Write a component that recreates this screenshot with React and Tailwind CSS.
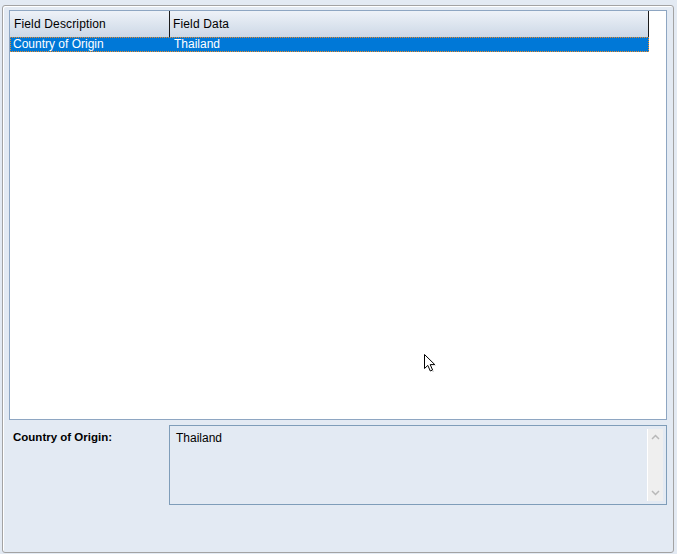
import React from "react";

const font = { fontFamily: '"Liberation Sans", Arial, sans-serif' };

function Cursor() {
    return (
        <svg className="absolute left-[423px] top-[353px]" width="14" height="20" viewBox="0 0 14 20">
            <path d="M1.5 1.5 L1.5 15.5 L4.8 12.4 L7.3 18 L9.6 17 L7.2 11.6 L11.8 11.6 Z" fill="#fff" stroke="#000" strokeWidth="1" strokeLinejoin="miter"/>
            <path d="M9.5 18.5 L11 18 M12.5 12.5 L12.5 13" stroke="#c8c8c8" strokeWidth="1"/>
        </svg>
    );
}

function Scrollbar() {
    return (
        <div className="absolute right-[3px] top-[3px] bottom-[3px] w-[16px] bg-[#efefef] border-l border-white flex flex-col justify-between items-center py-[5px]">
            <svg width="9" height="6" viewBox="0 0 9 6">
                <path d="M1 5 L4.5 1.5 L8 5" fill="none" stroke="#b8b8b8" strokeWidth="1.5"/>
            </svg>
            <svg width="9" height="6" viewBox="0 0 9 6">
                <path d="M1 1 L4.5 4.5 L8 1" fill="none" stroke="#b8b8b8" strokeWidth="1.5"/>
            </svg>
        </div>
    );
}

export default function App() {
    return (
        <div className="relative w-[677px] h-[554px] bg-[#e3eaf3] pt-[5px] pl-[2px] text-[12px] text-black" style={font}>
            <div className="w-[672px] h-[548px] border border-[#a3a3a3] rounded-[3px] shadow-[inset_1px_1px_0_#fff] pt-[4px] pl-[6px] pr-[5px] flex flex-col">
                {/* tabela */}
                <div className="w-[658px] h-[410px] border border-[#8ea6c2] bg-white">
                    <div className="flex w-[639px] h-[26px] bg-gradient-to-b from-[#eef2f8] to-[#ccd8e6] border-r border-[#1c1c1c]">
                        <div className="w-[160px] border-r border-[#1c1c1c] pl-[4px] flex items-center tracking-[0.15px]">Field Description</div>
                        <div className="flex-1 pl-[3px] flex items-center tracking-[0.15px]">Field Data</div>
                    </div>
                    <div className="flex w-[639px] h-[15px] bg-[#0078d7] text-white border border-dotted border-[#f08a24] leading-[13px]">
                        <div className="w-[160px] pl-[2px]">Country of Origin</div>
                        <div className="flex-1 pl-[3px]">Thailand</div>
                    </div>
                </div>

                {/* detalii */}
                <div className="flex mt-[5px]">
                    <div className="w-[160px] pl-[4px] pt-[4px] font-bold text-[11.5px]">Country of Origin:</div>
                    <div className="relative w-[498px] h-[80px] border border-[#7f9db9] pl-[6px] pt-[3px]">
                        Thailand
                        <Scrollbar/>
                    </div>
                </div>
            </div>
            <Cursor/>
        </div>
    );
}
